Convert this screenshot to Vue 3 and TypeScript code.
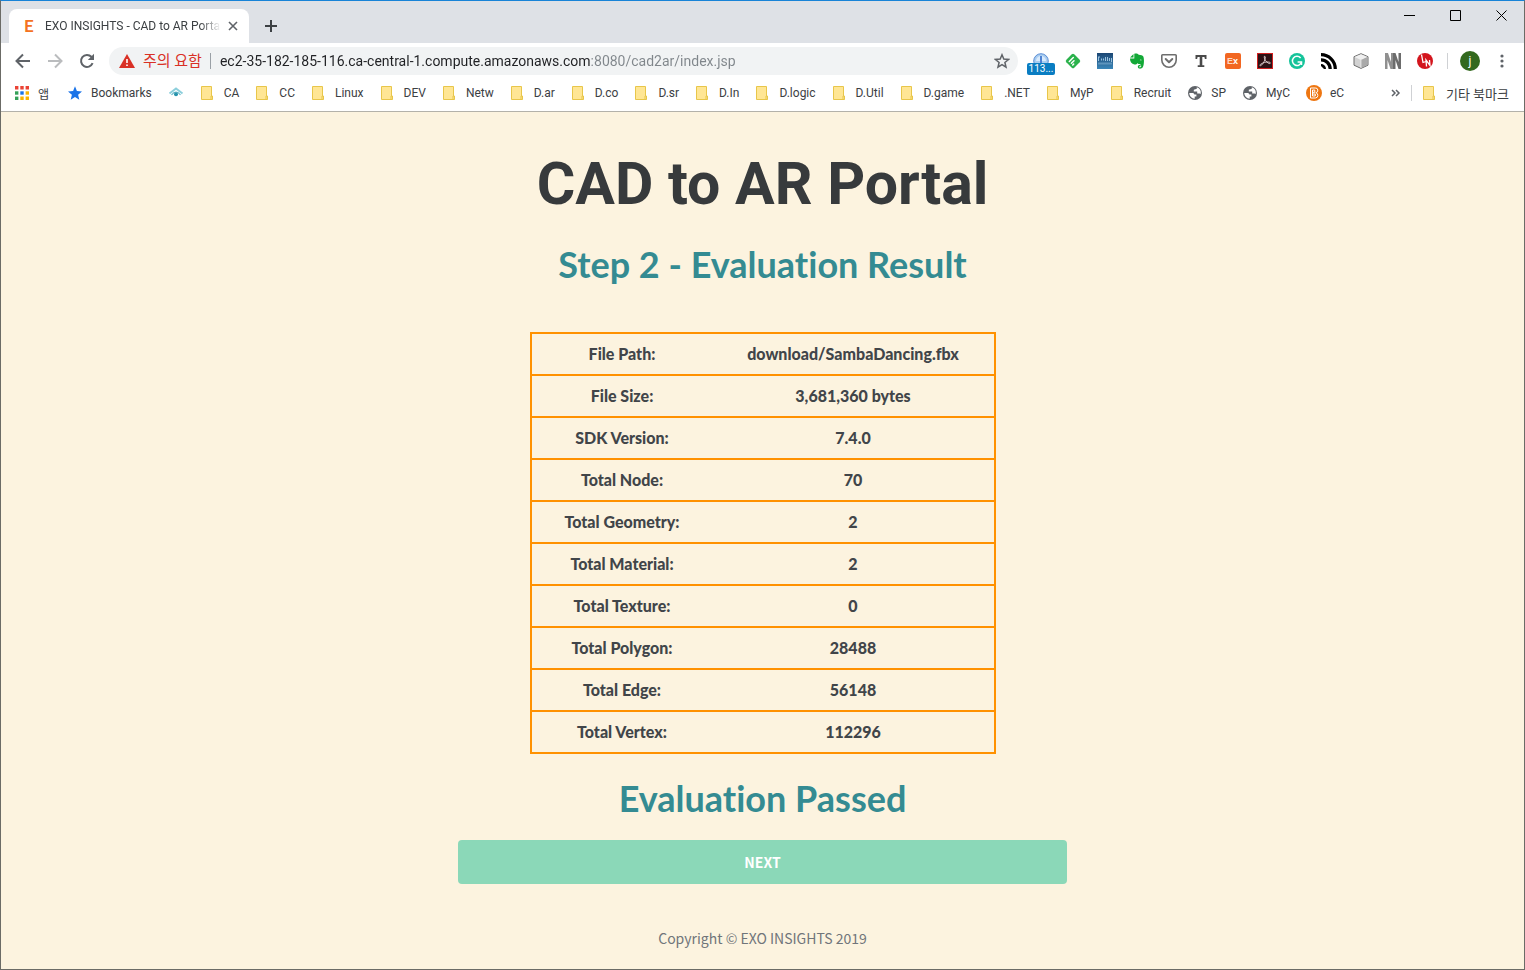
<script setup lang="ts">
import { ref } from 'vue'

interface Row {
  label: string
  value: string
}

interface Bookmark {
  label: string
  icon: 'folder' | 'globe' | 'star' | 'eye' | 'badge'
}

const address = ref('ec2-35-182-185-116.ca-central-1.compute.amazonaws.com:8080/cad2ar/index.jsp')

const bookmarks: Bookmark[] = [
  { label: 'Bookmarks', icon: 'star' },
  { label: '', icon: 'eye' },
  { label: 'CA', icon: 'folder' },
  { label: 'CC', icon: 'folder' },
  { label: 'Linux', icon: 'folder' },
  { label: 'DEV', icon: 'folder' },
  { label: 'Netw', icon: 'folder' },
  { label: 'D.ar', icon: 'folder' },
  { label: 'D.co', icon: 'folder' },
  { label: 'D.sr', icon: 'folder' },
  { label: 'D.In', icon: 'folder' },
  { label: 'D.logic', icon: 'folder' },
  { label: 'D.Util', icon: 'folder' },
  { label: 'D.game', icon: 'folder' },
  { label: '.NET', icon: 'folder' },
  { label: 'MyP', icon: 'folder' },
  { label: 'Recruit', icon: 'folder' },
  { label: 'SP', icon: 'globe' },
  { label: 'MyC', icon: 'globe' },
  { label: 'eC', icon: 'badge' },
]

const rows: Row[] = [
  { label: 'File Path:', value: 'download/SambaDancing.fbx' },
  { label: 'File Size:', value: '3,681,360 bytes' },
  { label: 'SDK Version:', value: '7.4.0' },
  { label: 'Total Node:', value: '70' },
  { label: 'Total Geometry:', value: '2' },
  { label: 'Total Material:', value: '2' },
  { label: 'Total Texture:', value: '0' },
  { label: 'Total Polygon:', value: '28488' },
  { label: 'Total Edge:', value: '56148' },
  { label: 'Total Vertex:', value: '112296' },
]
</script>

<template>
  <div class="window">
    <header class="chrome">
      <div class="tabstrip">
        <div class="tab">
          <span class="favicon" aria-hidden="true">E</span>
          <span class="tab-title">EXO INSIGHTS - CAD to AR Porta</span>
          <button class="tab-close" aria-label="Close tab">
            <svg viewBox="0 0 10 10"><path d="M1 1l8 8M9 1l-8 8" /></svg>
          </button>
        </div>
        <button class="new-tab" aria-label="New tab">
          <svg viewBox="0 0 12 12"><path d="M6 0v12M0 6h12" /></svg>
        </button>
        <div class="controls">
          <button aria-label="Minimize"><svg viewBox="0 0 11 11"><path d="M0 5.5h11" /></svg></button>
          <button aria-label="Maximize"><svg viewBox="0 0 11 11"><path d="M.5.5h10v10H.5z" /></svg></button>
          <button aria-label="Close"><svg viewBox="0 0 11 11"><path d="M.5.5l10 10M10.5.5l-10 10" /></svg></button>
        </div>
      </div>

      <div class="toolbar">
        <button class="tool" aria-label="Back">
          <svg class="nav" viewBox="0 0 16 16"><path d="M15 8H2M8 1.500L1.500 8 8 14.500" /></svg>
        </button>
        <button class="tool" aria-label="Forward" disabled>
          <svg class="nav faded" viewBox="0 0 16 16"><path d="M1 8h13M8 1.500L14.500 8 8 14.500" /></svg>
        </button>
        <button class="tool" aria-label="Reload">
          <svg class="nav" viewBox="0 0 16 16">
            <path d="M13.600 10.200A6 6 0 1 1 12.400 3.800L14 5.400" />
            <path class="solid" d="M15 .8v6.200H8.800z" />
          </svg>
        </button>
        <div class="omnibox">
          <svg class="warning" viewBox="0 0 16 14" aria-hidden="true">
            <path fill="#d93025" d="M8 0l8 14H0z" />
            <path fill="#fff" d="M7.200 5h1.600v4H7.200zM7.200 10.400h1.600V12H7.200z" />
          </svg>
          <span class="insecure">주의 요함</span>
          <span class="omni-divider"></span>
          <input v-model="address" class="address" type="text" aria-label="Address" spellcheck="false" />
          <button class="tool star" aria-label="Bookmark this page">
            <svg viewBox="0 0 16 16">
              <path d="M8 1.800l1.800 4.300 4.700.4-3.600 3 1.100 4.600L8 11.600l-4 2.500 1.100-4.600-3.600-3 4.700-.4z" />
            </svg>
          </button>
        </div>

        <div class="extensions">
          <button class="tool ext-count" aria-label="Ad guard">
            <svg viewBox="0 0 16 16">
              <circle cx="8" cy="8" r="7.300" fill="#a9cdf0" stroke="#5d8fd6" />
              <path d="M3 8a5 5 0 0 1 10 0z" fill="#d9eafc" />
              <path d="M8 3v8" stroke="#4e82d2" stroke-width="2" />
            </svg>
            <span class="count">113...</span>
          </button>
          <button class="tool" aria-label="Feedly">
            <svg viewBox="0 0 16 16">
              <rect x="2.400" y="2.400" width="11.200" height="11.200" rx="1.800" fill="#2bb24c" transform="rotate(45 8 8)" />
              <path d="M4.300 8.500L8.300 4.500M6.400 10.300l2.600-2.600M7.700 12l.9-.9" stroke="#fff" stroke-width="1.500" stroke-linecap="round" />
            </svg>
          </button>
          <button class="tool" aria-label="Tooltip dictionary">
            <svg viewBox="0 0 16 16">
              <defs>
                <linearGradient id="dict" x1="0" y1="0" x2="0" y2="1">
                  <stop offset="0" stop-color="#1c4774" />
                  <stop offset="1" stop-color="#3b86b8" />
                </linearGradient>
              </defs>
              <path fill="url(#dict)" d="M0 0h16v16H0z" />
              <path d="M1.500 4v4M1 4h2M4.500 5.500v2M6.500 5.500v2M8.500 4v4M10.500 4v4M12.500 5v3M14.500 5v4" stroke="#9cc2de" />
              <path d="M1.500 10.500h13" stroke="#8ab8d8" stroke-width="2" stroke-dasharray="1 1" />
            </svg>
          </button>
          <button class="tool" aria-label="Evernote">
            <svg viewBox="0 0 16 16">
              <path fill="#12a836" d="M1 4.500L4.500 1v3.500zM5.300.8C7 .2 9 .8 9.700 1.800c2.200.1 4 .5 4.600 1.600 1 2.400.9 8-.4 10.700-.8 1.500-2.600 1.900-3.900 1.500-1.300-.5-1.700-2.700-.4-3.400.8-.5 1.700-.2 2-.1v1.100c-1.200-.2-1.500.2-1.400.8.2.8 1.900.5 2-.7.1-1.200-.7-2.200-2-2.300-1-.1-1.500-.5-1.800-1.100-.4 1.300-1.700 1.700-3 1.500C2.500 11 1 8.700 1 5.400h4.300z" />
              <path d="M10.800 7.200c.6-1 1.500-.9 2 .1z" fill="#fff" />
            </svg>
          </button>
          <button class="tool" aria-label="Pocket">
            <svg viewBox="0 0 16 16">
              <path d="M1.600 1.800h12.800q.8 0 .8.800V7a7.200 7.200 0 0 1-14.400 0V2.600q0-.8.800-.8z" stroke="#6e6e6e" stroke-width="1.600" />
              <path d="M4.700 6L8 9.200 11.300 6" stroke="#6e6e6e" stroke-width="2" stroke-linecap="round" stroke-linejoin="round" />
            </svg>
          </button>
          <button class="tool" aria-label="Text tool">
            <svg viewBox="0 0 16 16">
              <path fill="#4a4a4a" d="M2.500 2h11v4h-1.600l-.5-2H9.300v8.200h2V14H4.700v-1.800h2V4H4.600l-.5 2H2.500z" />
            </svg>
          </button>
          <button class="tool" aria-label="Ex">
            <svg viewBox="0 0 16 16">
              <rect width="16" height="16" rx="2" fill="#f26722" />
              <text x="2" y="11" class="glyph" font-size="9"><tspan fill="#ffd9c2">E</tspan>x</text>
            </svg>
          </button>
          <button class="tool" aria-label="Acrobat">
            <svg viewBox="0 0 16 16">
              <rect x=".5" y=".5" width="15" height="15" fill="#2d1115" stroke="#d11f1f" />
              <path d="M7.400 3.300c1.500-.4 1 3.200-.6 5.800-1.500 2.700-3.600 4.500-3.900 3.300C2.600 11.100 7 9.200 10 9c2.500-.1 3.900.5 3.200 1.400C12 11.600 6.400 7 7.400 3.300z" stroke="#e6d6d6" stroke-width=".9" />
            </svg>
          </button>
          <button class="tool" aria-label="Grammarly">
            <svg viewBox="0 0 16 16">
              <circle cx="8" cy="8" r="8" fill="#15c39a" />
              <path d="M11.600 5A4.600 4.600 0 1 0 12.500 9" stroke="#fff" stroke-width="1.500" />
              <path d="M8.600 8.900h3.900v3" stroke="#fff" stroke-width="1.500" />
            </svg>
          </button>
          <button class="tool" aria-label="RSS feed">
            <svg viewBox="0 0 16 16">
              <path d="M0 1.700A14.300 14.300 0 0 1 14.300 16M0 6.800A9.200 9.200 0 0 1 9.200 16" stroke="#000" stroke-width="3.200" />
              <path d="M0 11a5 5 0 0 1 5 5H3L0 13z" fill="#000" />
            </svg>
          </button>
          <button class="tool" aria-label="Cube">
            <svg viewBox="0 0 16 16">
              <path d="M8 .7l7 3v8.500l-7 3.200-7-3.200V3.700z" fill="#d2d2d2" stroke="#6c6c6c" />
              <path d="M1.500 4L8 1.200 14.500 4 8 7z" fill="#f0f0f0" />
              <path d="M8 7l6.500-3v8L8 15z" fill="#aaa" />
              <path d="M8 7v8" stroke="#fff" stroke-width=".6" />
            </svg>
          </button>
          <button class="tool" aria-label="NN">
            <svg viewBox="0 0 16 16">
              <path d="M0 0h3l3 9V0h2v16H5.500L2.500 7v9H0z" fill="#909090" />
              <path d="M8 0h2.500l3 9V0H16v16h-2.500l-3-9v9H8z" fill="#6c6c6c" />
            </svg>
          </button>
          <button class="tool" aria-label="LN">
            <svg viewBox="0 0 16 16">
              <circle cx="8" cy="8" r="8" fill="#d3151d" />
              <path d="M4.500 1.500l1.500 8 3-1M9.500 13.500L9 7l4 5.500-.5-5.500" stroke="#fff" stroke-width="1.300" />
            </svg>
          </button>
        </div>
        <span class="bar-divider"></span>
        <button class="avatar" aria-label="Profile">j</button>
        <button class="tool menu" aria-label="Menu">
          <svg viewBox="0 0 16 16">
            <circle cx="8" cy="3" r="1.600" /><circle cx="8" cy="8" r="1.600" /><circle cx="8" cy="13" r="1.600" />
          </svg>
        </button>
      </div>

      <nav class="bookmarks" aria-label="Bookmarks bar">
        <a class="bookmark apps" href="#">
          <svg viewBox="0 0 16 16">
            <path fill="#ea4335" d="M1 1h3.400v3.400H1zM6.300 1h3.400v3.400H6.300zM11.600 1H15v3.400h-3.400z" />
            <path fill="#34a058" d="M1 6.300h3.400v3.400H1z" /><path fill="#1a73e8" d="M6.300 6.300h3.400v3.400H6.300z" />
            <path fill="#fbb400" d="M11.600 6.300H15v3.400h-3.400z" />
            <path fill="#34a058" d="M1 11.600h3.400V15H1z" /><path fill="#fbb400" d="M6.300 11.600h3.400V15H6.300zM11.600 11.600H15V15h-3.400z" />
          </svg>
          <span>앱</span>
        </a>
        <a v-for="(b, i) in bookmarks" :key="i" class="bookmark" href="#" :aria-label="b.label || 'Site'">
          <svg v-if="b.icon === 'folder'" viewBox="0 0 16 16">
            <path d="M1.500 1.500h10v9.500h.5v3.500H1.500z" fill="#ffe694" stroke="#e8c64a" />
            <path d="M11 11h1.500v3.500H11z" fill="#ffe694" stroke="#e8c64a" />
          </svg>
          <svg v-else-if="b.icon === 'star'" viewBox="0 0 16 16">
            <path fill="#1a73e8" d="M8 1.300l1.900 4.700 5.100.4-3.900 3.300 1.200 5L8 12l-4.300 2.700 1.200-5L1 6.400 6.100 6z" />
          </svg>
          <svg v-else-if="b.icon === 'eye'" viewBox="0 0 16 16">
            <path d="M1.500 8.500L8 3.500l6.500 5" stroke="#8ccfdc" stroke-width="2" />
            <path d="M3.500 10Q8 4 12.500 10" stroke="#63b6c8" stroke-width="1.200" />
            <circle cx="8" cy="9.300" r="2" fill="#2793ac" />
          </svg>
          <svg v-else-if="b.icon === 'globe'" viewBox="0 0 16 16">
            <circle cx="8" cy="8" r="7" fill="#5f6368" />
            <path d="M2.500 8h3.300q1.500.2 1.600 1.500h2v2H7.700v2.300A6 6 0 0 1 2.200 8zM9.800 2.300v1.500l-3 .9v1.700h3.400v2h2.300l1.200.6a6 6 0 0 0-3.900-6.700z" fill="#fff" />
          </svg>
          <svg v-else viewBox="0 0 16 16">
            <circle cx="8" cy="8" r="8" fill="#ee7611" />
            <path d="M4.500 3h4.700a2.300 2.300 0 0 1 .6 4.700 2.700 2.700 0 0 1-.4 5.300H4.500zM6.500 5v6M6.500 5h2.300v2.300H6.500M6.500 9h2.800v2H6.500" stroke="#fff" stroke-width="1" />
          </svg>
          <span v-if="b.label">{{ b.label }}</span>
        </a>
        <button class="overflow" aria-label="More bookmarks">
          <svg viewBox="0 0 10 8"><path d="M1 1l3 3-3 3M5 1l3 3-3 3" /></svg>
        </button>
        <span class="bar-divider"></span>
        <a class="bookmark other" href="#">
          <svg viewBox="0 0 16 16">
            <path d="M1.500 1.500h10v9.500h.5v3.500H1.500z" fill="#ffe694" stroke="#e8c64a" />
            <path d="M11 11h1.500v3.500H11z" fill="#ffe694" stroke="#e8c64a" />
          </svg>
          <span>기타 북마크</span>
        </a>
      </nav>
    </header>

    <main class="page">
      <h1>CAD to AR Portal</h1>
      <h2>Step 2 - Evaluation Result</h2>
      <table class="results">
        <tbody>
          <tr v-for="row in rows" :key="row.label">
            <th scope="row">{{ row.label }}</th>
            <td>{{ row.value }}</td>
          </tr>
        </tbody>
      </table>
      <h2>Evaluation Passed</h2>
      <button class="next" type="button">NEXT</button>
      <footer>Copyright © EXO INSIGHTS 2019</footer>
    </main>
  </div>
</template>

<style>
body {
  margin: 0;
  background: #fcf3df;
}
</style>

<style scoped>
.window {
  box-sizing: border-box;
  min-height: 100vh;
  display: flex;
  flex-direction: column;
  border: 1px solid #6b6b66;
  border-top-color: #1883d7;
  background: #fcf3df;
  font-family: Roboto, "Noto Sans CJK KR", sans-serif;
  font-size: 12px;
  color: #3c4043;
}
button {
  padding: 0;
  border: 0;
  background: none;
  font: inherit;
  color: inherit;
}
svg {
  display: block;
  flex: none;
  fill: none;
}
.chrome {
  background: #fff;
  border-bottom: 1px solid #b3b1aa;
}
.tabstrip {
  display: flex;
  height: 42px;
  align-items: flex-end;
  background: #dee1e6;
  padding-left: 8px;
}
.tab {
  box-sizing: border-box;
  display: flex;
  align-items: center;
  width: 240px;
  height: 34px;
  padding: 0 8px 0 12px;
  border-radius: 8px 8px 0 0;
  background: #fff;
}
.favicon {
  width: 16px;
  margin-right: 8px;
  color: #f47321;
  font: 700 17px/20px Lato, sans-serif;
  text-align: center;
}
.tab-title {
  flex: 1;
  white-space: nowrap;
  mask-image: linear-gradient(90deg, #000 88%, transparent);
}
.tab-close {
  width: 16px;
  height: 16px;
  margin-left: 4px;
  display: grid;
  place-items: center;
}
.tab-close svg {
  width: 10px;
  height: 10px;
  stroke: #5f6368;
  stroke-width: 1.600;
}
.new-tab {
  width: 28px;
  height: 34px;
  margin-left: 8px;
  display: grid;
  place-items: center;
}
.new-tab svg {
  width: 12px;
  height: 12px;
  stroke: #3c4043;
  stroke-width: 2;
}
.controls {
  display: flex;
  align-self: flex-start;
  margin-left: auto;
}
.controls button {
  width: 46px;
  height: 28px;
  display: grid;
  place-items: center;
}
.controls svg {
  width: 11px;
  height: 11px;
  stroke: #000;
}
.toolbar {
  display: flex;
  align-items: center;
  height: 36px;
  padding: 0 6px;
}
.tool {
  flex: none;
  width: 32px;
  height: 28px;
  display: grid;
  place-items: center;
}
.tool svg {
  width: 16px;
  height: 16px;
}
.tool .nav {
  stroke: #5f6368;
  stroke-width: 2;
}
.tool .faded {
  stroke: #babcbe;
}
.tool .solid {
  fill: #5f6368;
  stroke: none;
}
.omnibox {
  flex: 1;
  min-width: 0;
  display: flex;
  align-items: center;
  height: 28px;
  margin: 0 7px 0 6px;
  padding-left: 10px;
  border-radius: 14px;
  background: #f1f3f4;
}
.warning {
  width: 16px;
  height: 14px;
}
.insecure {
  margin-left: 8px;
  font-size: 15px;
  line-height: 20px;
  color: #d93025;
  white-space: nowrap;
}
.omni-divider {
  width: 1px;
  height: 16px;
  margin: 0 9px 0 8px;
  background: #9aa0a6;
}
.address {
  flex: 1;
  min-width: 0;
  padding: 0;
  border: 0;
  outline: 0;
  font: 14px/20px Roboto, sans-serif;
  color: transparent;
  background: linear-gradient(90deg, #202124 370px, #80868b 370px);
  background-clip: text;
}
.star svg {
  stroke: #5f6368;
  stroke-width: 1.500;
}
.extensions {
  display: flex;
}
.ext-count {
  position: relative;
}
.count {
  position: absolute;
  left: 2px;
  top: 16px;
  width: 28px;
  height: 12px;
  border-radius: 2px;
  background: #0a7dc2;
  color: #fff;
  font-size: 10px;
  line-height: 12px;
  text-align: center;
}
.glyph {
  fill: #fff;
  font-family: "Liberation Sans", sans-serif;
  font-weight: 700;
}
.bar-divider {
  flex: none;
  width: 1px;
  height: 16px;
  margin: 0 12px 0 6px;
  background: #cfd1d4;
}
.avatar {
  flex: none;
  width: 20px;
  height: 20px;
  border-radius: 50%;
  background: #33691e;
  color: #fff;
  line-height: 20px;
}
.menu {
  margin-left: 6px;
}
.menu svg {
  fill: #5f6368;
}
.bookmarks {
  display: flex;
  align-items: center;
  height: 32px;
  padding: 0 15px 4px 13px;
  box-sizing: border-box;
}
.bookmark {
  flex: none;
  display: flex;
  align-items: center;
  gap: 8px;
  margin-right: 16px;
  color: #3c4043;
  text-decoration: none;
  white-space: nowrap;
}
.bookmark.apps {
  margin-right: 18px;
}
.bookmark svg {
  width: 16px;
  height: 16px;
}
.overflow {
  margin-left: auto;
}
.overflow svg {
  width: 10px;
  height: 8px;
  stroke: #5f6368;
  stroke-width: 1.500;
}
.bookmarks .bar-divider {
  margin: 0 10px;
}
.bookmark.other {
  margin-right: 0;
  font-size: 13px;
}
.page {
  flex: 1;
  display: flex;
  flex-direction: column;
  align-items: center;
  padding: 36px 0 0;
}
h1,
h2 {
  margin: 0;
  font-weight: 700;
  white-space: nowrap;
}
h1 {
  font-family: Roboto, sans-serif;
  font-size: 59px;
  line-height: 72px;
  color: #373a3c;
}
h2 {
  margin-top: 14px;
  font-family: Lato, cursive;
  font-size: 36px;
  line-height: 60px;
  font-variant-ligatures: none;
  color: #348b92;
}
.results {
  width: 466px;
  margin-top: 38px;
  border-collapse: collapse;
  border: 2px solid #ff9100;
  table-layout: fixed;
  font-family: Lato, sans-serif;
  font-size: 16px;
  line-height: 24px;
  font-variant-ligatures: none;
  color: #414549;
}
.results tr {
  border: 2px solid #ff9100;
}
.results th,
.results td {
  padding: 8px 0;
  font-weight: 900;
  text-align: center;
}
.results th {
  width: 181px;
}
.next {
  width: 40%;
  height: 44px;
  margin-top: 12px;
  border-radius: 4px;
  background: #8bd8b8;
  color: #fff;
  font: 700 14px/24px "Noto Sans CJK KR", sans-serif;
}
footer {
  margin-top: 42px;
  padding-bottom: 18px;
  font: 14px/24px "Noto Sans CJK KR", sans-serif;
  color: #70757a;
}
</style>
